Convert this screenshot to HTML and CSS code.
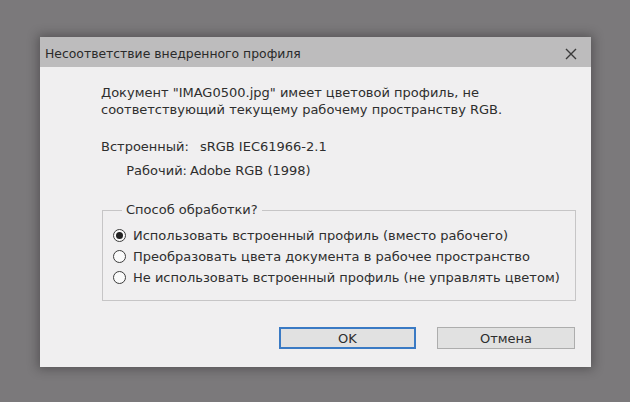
FILE: index.html
```html
<!DOCTYPE html>
<html lang="ru">
<head>
<meta charset="utf-8">
<title>Несоответствие внедренного профиля</title>
<link rel="stylesheet" href="styles.css">
</head>
<body>
<div class="dialog">
  <div class="titlebar">
    <span class="title">Несоответствие внедренного профиля</span>
    <svg class="close" width="12" height="12" viewBox="0 0 12 12"><path d="M1 1 L11 11 M11 1 L1 11" stroke="#3a3a3a" stroke-width="1.4" fill="none"/></svg>
  </div>
  <div class="content">
    <p class="message">Документ "IMAG0500.jpg" имеет цветовой профиль, не<br>соответствующий текущему рабочему пространству RGB.</p>
    <div class="info">
      <div class="info-row"><span class="label">Встроенный:</span><span class="value value-wide">sRGB IEC61966-2.1</span></div>
      <div class="info-row"><span class="label">Рабочий:</span><span class="value">Adobe RGB (1998)</span></div>
    </div>
    <fieldset class="group">
      <legend>Способ обработки?</legend>
      <label class="radio"><span class="dot checked"></span>Использовать встроенный профиль (вместо рабочего)</label>
      <label class="radio"><span class="dot"></span>Преобразовать цвета документа в рабочее пространство</label>
      <label class="radio"><span class="dot"></span>Не использовать встроенный профиль (не управлять цветом)</label>
    </fieldset>
    <div class="buttons">
      <button class="btn btn-default">OK</button>
      <button class="btn">Отмена</button>
    </div>
  </div>
</div>
</body>
</html>
```
FILE: styles.css
```css
html, body {
  margin: 0;
  padding: 0;
}
body {
  width: 630px;
  height: 402px;
  overflow: hidden;
  background: #7b797b;
  font-family: "DejaVu Sans", "Noto Sans", sans-serif;
  font-size: 13px;
  color: #2e2e2e;
  display: flex;
  align-items: flex-start;
}
.dialog {
  margin: 37px 0 0 40px;
  width: 551px;
  height: 330px;
  background: #f0eff0;
  box-shadow: 0 0 10px 2px rgba(40, 38, 40, 0.45);
  display: flex;
  flex-direction: column;
}
.titlebar {
  height: 30px;
  box-sizing: border-box;
  background: #bdbcbd;
  display: flex;
  align-items: center;
  justify-content: space-between;
  padding: 3px 14px 0 5px;
}
.title {
  font-size: 12.4px;
  color: #2a2a2a;
}
.close {
  display: block;
}
.content {
  display: flex;
  flex-direction: column;
  padding: 0 15px 0 61px;
}
.message {
  margin: 17px 0 0 0;
  line-height: 17px;
}
.info {
  margin-top: 20px;
  display: flex;
  flex-direction: column;
  gap: 7px;
}
.info-row {
  display: flex;
  line-height: 17px;
}
.label {
  flex: 0 0 86px;
  text-align: right;
}
.value {
  margin-left: 3px;
}
.value-wide {
  margin-left: 11px;
}
.group {
  margin: 23px 0 0 1px;
  width: 474px;
  height: 99px;
  box-sizing: border-box;
  border: 1px solid #c6c5c6;
  padding: 9px 0 0 10px;
  display: flex;
  flex-direction: column;
  gap: 4px;
}
.group legend {
  padding: 0 4px;
  margin-left: 9px;
  line-height: 16px;
}
.radio {
  display: flex;
  align-items: center;
  line-height: 17px;
  gap: 7px;
}
.dot {
  width: 11px;
  height: 11px;
  border: 1px solid #3c3c3c;
  border-radius: 50%;
  background: #fafafa;
  box-sizing: content-box;
  display: flex;
  align-items: center;
  justify-content: center;
  flex: none;
}
.dot.checked::after {
  content: "";
  width: 7px;
  height: 7px;
  border-radius: 50%;
  background: #222;
}
.buttons {
  margin-top: 26px;
  display: flex;
  gap: 21px;
  padding-left: 178px;
}
.btn {
  width: 138px;
  height: 22px;
  font: inherit;
  color: #2e2e2e;
  background: #e1e1e1;
  border: 1px solid #adadad;
  padding: 0;
}
.btn-default {
  width: 137px;
  border: 2px solid #3a7ac4;
}
```
